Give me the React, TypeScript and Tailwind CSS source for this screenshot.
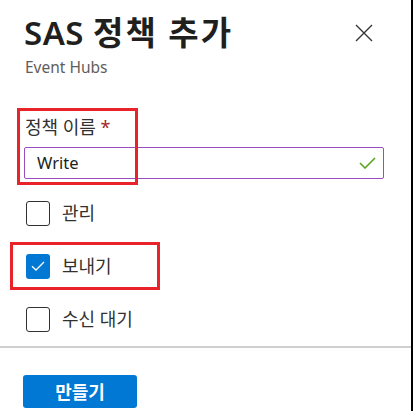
const font = { fontFamily: '"Noto Sans", "Noto Sans CJK KR", sans-serif' };

const Checkbox = ({ checked, label }: { checked?: boolean; label: string }) => (
  <div className="flex items-center gap-[12px] h-[24px]">
    {checked ? (
      <div className="w-[24px] h-[25px] rounded-[3px] bg-[#0078d4] flex items-center justify-center">
        <svg width="14" height="10" viewBox="0 0 14 10" fill="none">
          <path d="M1 5.2 L5 9 L13 1" stroke="white" strokeWidth="1.3" />
        </svg>
      </div>
    ) : (
      <div className="w-[24px] h-[25px] rounded-[3px] border-[1.5px] border-[#323130] bg-white" />
    )}
    <span className="text-[18px] leading-[24px] text-[#323130]">{label}</span>
  </div>
);

export default function App() {
  return (
    <div className="w-[415px] h-[411px] bg-white flex overflow-hidden" style={font}>
      <div className="relative w-[413px] h-full border-r-2 border-black flex flex-col">
        {/* header */}
        <div className="flex justify-between pl-[24px] pr-[38px] pt-[13px]">
          <div className="flex flex-col">
            <h2 className="text-[33px] leading-[40px] font-semibold tracking-[0.5px] text-[#201f1e]">
              SAS <span className="tracking-[2px]">정책 추가</span>
            </h2>
            <span className="mt-[4px] pl-[1px] text-[15.5px] leading-[20px] text-[#605e5c]">Event Hubs</span>
          </div>
          <button className="mt-[11px] w-[18px] h-[18px]">
            <svg width="18" height="18" viewBox="0 0 18 18" fill="none">
              <path d="M1 1 L17 17 M17 1 L1 17" stroke="#323130" strokeWidth="1.3" />
            </svg>
          </button>
        </div>

        {/* form */}
        <div className="flex flex-col pl-[24px] pr-[27px] mt-[38px]">
          <label className="text-[18px] leading-[24px] text-[#323130] pl-[1px]">
            정책 이름 <span className="text-[#a4262c]">*</span>
          </label>
          <div className="mt-[8px] h-[32px] flex items-center justify-between rounded-[2px] border-[1.5px] border-[#9b4dc0] pl-[12px] pr-[7px]">
            <span className="text-[16.5px] text-[#201f1e]">Write</span>
            <svg width="17" height="12" viewBox="0 0 17 12" fill="none">
              <path d="M1 6 L6 11 L16 1" stroke="#5aa61f" strokeWidth="1.6" />
            </svg>
          </div>

          <div className="flex flex-col gap-[29px] mt-[22px] pl-[2px]">
            <Checkbox label="관리" />
            <Checkbox checked label="보내기" />
            <Checkbox label="수신 대기" />
          </div>
        </div>

        <div className="mt-[15px] h-[2px] bg-[#d2d0ce]" />

        <div className="pl-[23px] mt-[27px]">
          <button className="w-[114px] h-[33px] rounded-[3px] bg-[#0078d4] text-white text-[18px] leading-[24px] font-bold">
            만들기
          </button>
        </div>

        {/* red annotation boxes */}
        <div className="absolute left-[17px] top-[108px] w-[121px] h-[77px] border-[3px] border-[#e8232a]" />
        <div className="absolute left-[10px] top-[242px] w-[150px] h-[48px] border-[3px] border-[#e8232a]" />
      </div>
    </div>
  );
}
